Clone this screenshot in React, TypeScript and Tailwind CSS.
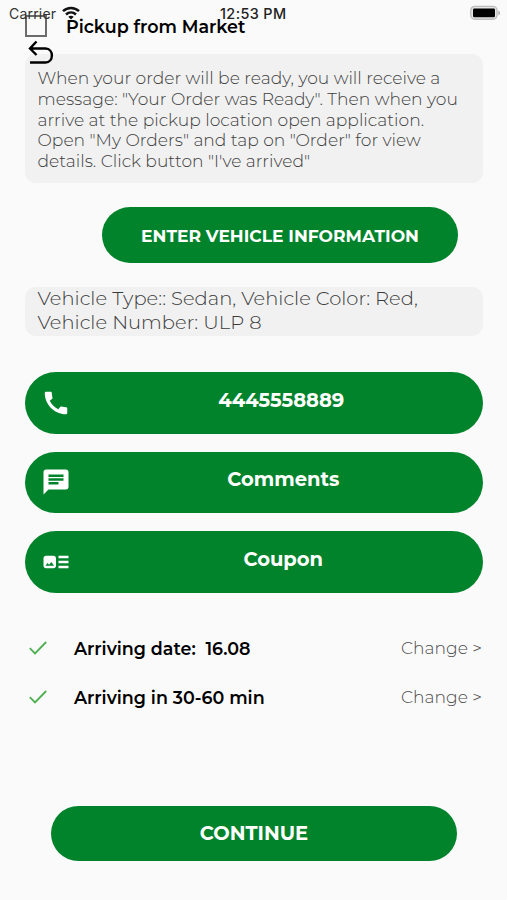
import type { ReactNode } from 'react';
import { MdArtTrack, MdCall, MdChat } from 'react-icons/md';

function StatusBar() {
  return (
    <div className="absolute inset-x-0 top-0 h-7 font-['Inter',sans-serif] text-[14px] leading-7 text-[#222]">
      <span className="absolute left-[9px] top-0 tracking-[0.2px] text-[#333]">Carrier</span>
      <svg className="absolute left-[62px] top-[6px]" width="18" height="14" viewBox="0 0 18 14" fill="none" stroke="#111" strokeWidth="2.5">
        <path d="M1 5.2C5.5.8 12.5.8 17 5.2" />
        <path d="M4 8.5c2.9-2.7 7.1-2.7 10 0" />
        <path d="M9 13.5 6.3 10.8c1.5-1.3 3.9-1.3 5.4 0Z" fill="#111" stroke="none" />
      </svg>
      <span className="absolute left-[220px] top-0 whitespace-nowrap text-[14.4px] font-medium tracking-[0.4px]">12:53 PM</span>
      <svg className="absolute left-[470px] top-[5px]" width="31" height="16" viewBox="0 0 31 16">
        <rect x="0.8" y="1.4" width="26.2" height="12.8" rx="4" fill="#e6e6e6" stroke="#bdbdbd" strokeWidth="1.4" />
        <rect x="3" y="3.6" width="22" height="8.6" rx="1.2" fill="#000" />
        <path d="M28.3 5.5c2.2.8 2.2 4 0 4.8Z" fill="#aaa" />
      </svg>
    </div>
  );
}

function ActionButton({ icon, inset = 'pl-[13px]', children }: { icon: ReactNode; inset?: string; children: ReactNode }) {
  return (
    <button className="flex h-[61.5px] w-full items-center rounded-full bg-[#01832b] pl-[15.5px] text-white">
      {icon}
      <span className={`flex-1 pb-[6px] text-center text-[19.5px] font-bold leading-6 ${inset}`}>{children}</span>
    </button>
  );
}

function ArrivalRow({ children }: { children: ReactNode }) {
  return (
    <div className="flex h-[49px] items-center">
      <svg width="18" height="14" viewBox="0 0 18 14" fill="none" stroke="#4caf50" strokeWidth="1.8" className="ml-1">
        <path d="M.8 7.2 6 12.4 17.2 1" />
      </svg>
      <span className="ml-[27px] flex-1 whitespace-pre pt-[2px] text-[17.5px] font-semibold text-black">{children}</span>
      <span className="mr-px whitespace-nowrap text-[17.1px] font-light text-[#4c4c4c]">Change &gt;</span>
    </div>
  );
}

export default function App() {
  return (
    <main className="relative h-[900px] w-[507px] overflow-hidden bg-[#fafafa] pl-[25px] pr-[24px] font-['Montserrat','Inter',sans-serif]">
      <div className="flex h-[54px] items-start">
        <span className="mt-[15px] h-[21.5px] w-[22px] border-2 border-[#6b6b6b]" />
        <span className="ml-[19px] mt-[15px] whitespace-nowrap text-[17.5px] font-semibold leading-6 text-black">Pickup from Market</span>
      </div>

      <section className="h-[129px] rounded-[11px] bg-[#f1f1f1] pl-[12.5px] pt-[14px] text-[17.12px] font-light leading-[20.8px] text-[#404040]">
        <p className="whitespace-nowrap">When your order will be ready, you will receive a</p>
        <p className="whitespace-nowrap">message: "Your Order was Ready". Then when you</p>
        <p className="whitespace-nowrap">arrive at the pickup location open application.</p>
        <p className="whitespace-nowrap">Open "My Orders" and tap on "Order" for view</p>
        <p className="whitespace-nowrap">details. Click button "I've arrived"</p>
      </section>

      <button className="ml-[77px] mt-[24px] flex h-[55.5px] w-[356px] items-center justify-center rounded-full bg-[#01832b] pt-[2px] text-[17.12px] font-bold text-white">
        <span className="whitespace-nowrap">ENTER VEHICLE INFORMATION</span>
      </button>

      <section className="mt-[24px] flow-root h-[49.5px] rounded-[11px] bg-[#f1f1f1] pl-[12.5px] text-[19.53px] font-light leading-[24.4px] text-[#3a3a3a]">
        <p className="-mt-px whitespace-nowrap">Vehicle Type:: Sedan, Vehicle Color: Red,</p>
        <p className="whitespace-nowrap">Vehicle Number: ULP 8</p>
      </section>

      <div className="mt-[36px] flex flex-col gap-[18px]">
        <ActionButton icon={<MdCall size={30} />} inset="pl-[9px]">4445558889</ActionButton>
        <ActionButton icon={<MdChat size={30} />}>Comments</ActionButton>
        <ActionButton icon={<MdArtTrack size={30} />}>Coupon</ActionButton>
      </div>

      <div className="mt-[31px]">
        <ArrivalRow>Arriving date:  16.08</ArrivalRow>
        <ArrivalRow>Arriving in 30-60 min</ArrivalRow>
      </div>

      <button className="ml-[26px] mt-[84px] flex h-[55px] w-[406px] items-center justify-center rounded-full bg-[#01832b] pt-px text-[19.5px] font-bold text-white">
        <span>CONTINUE</span>
      </button>

      <svg className="absolute left-[28px] top-[40px]" width="26" height="25" viewBox="0 0 26 25" fill="none" stroke="#000" strokeWidth="2.4">
        <path d="M8.5 1.5 2 8.5l6.5 6.5M2 8.5h15.5c8.5 0 8.5 14 0 14H2" />
      </svg>
      <StatusBar />
    </main>
  );
}
